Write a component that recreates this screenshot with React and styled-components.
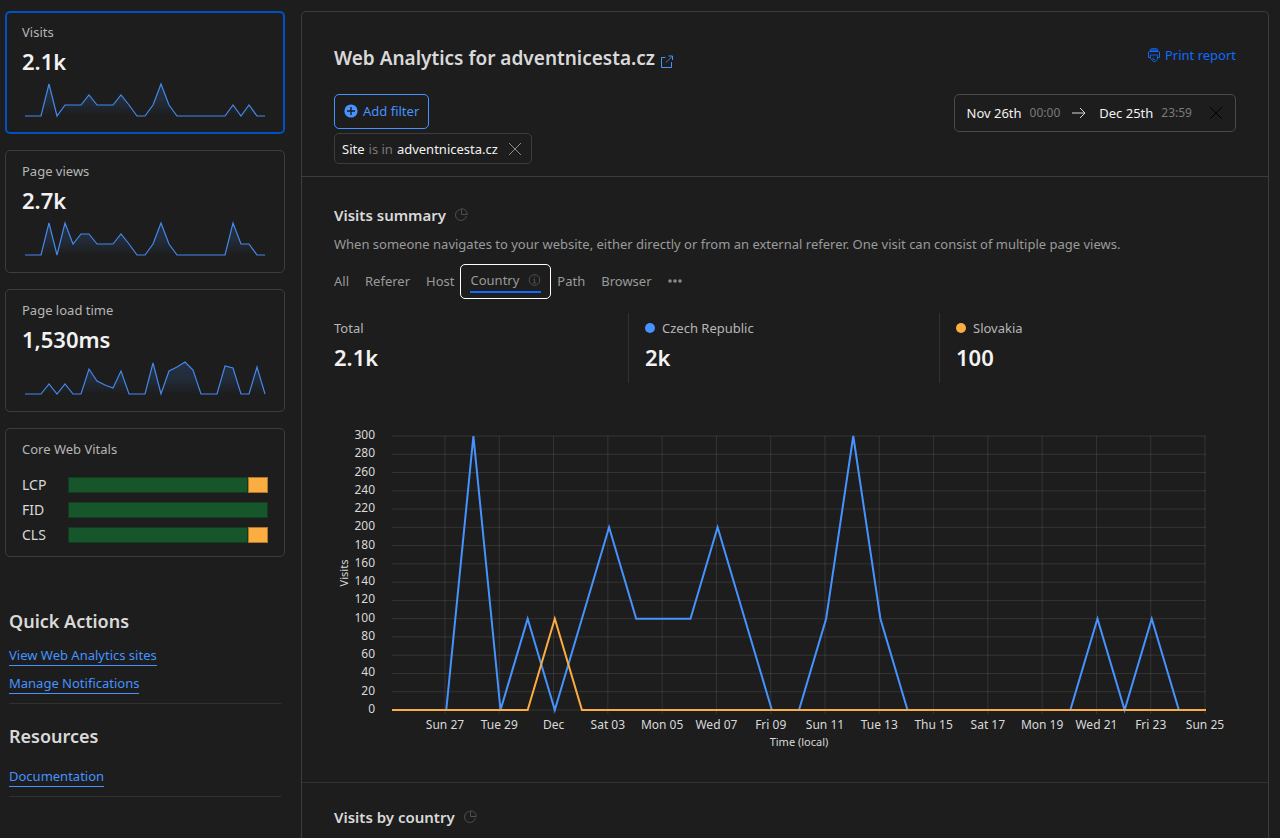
import React from "react";
import styled, { createGlobalStyle } from "styled-components";

const GlobalStyle = createGlobalStyle`
  *, *::before, *::after { box-sizing: border-box; }
  body {
    margin: 0;
    background: #1d1d1d;
    color: #d9d9d9;
    font-family: "Noto Sans", "Open Sans", sans-serif;
    font-size: 13px;
    line-height: 20px;
  }
  button { font: inherit; cursor: pointer; }
  h1, h2, h3, p, ul, dl, dd { margin: 0; padding: 0; }
`;

const Page = styled.div`
  display: grid;
  grid-template-columns: 280px minmax(0, 1fr);
  gap: 16px;
  min-height: 100vh;
  padding: 11px 11px 0 5px;
`;

const Sidebar = styled.aside`
  display: flex;
  flex-direction: column;
  gap: 16px;
`;

const Card = styled.section`
  height: ${(p) => (p.$tall ? 129 : 123)}px;
  padding: ${(p) => (p.$active ? 9 : 10)}px ${(p) => (p.$active ? 15 : 16)}px 0;
  border: ${(p) => (p.$active ? "2px solid #0051c3" : "1px solid #3d3d3d")};
  border-radius: 5px;
`;

const CardTitle = styled.h2`
  font-size: 13px;
  font-weight: 400;
  line-height: 20px;
  color: #b6b6b6;
`;

const CardValue = styled.p`
  font-size: 22px;
  font-weight: 600;
  line-height: 32px;
  padding: 3px 0 5px;
  color: #f2f2f2;
`;

const Spark = styled.svg`
  display: block;
  width: 100%;
  height: 40px;
`;

const Vitals = styled.dl`
  display: grid;
  grid-template-columns: 46px 1fr;
  row-gap: 5px;
  padding-top: 16px;
  align-items: center;
`;

const VitalName = styled.dt`
  font-size: 14px;
  line-height: 20px;
  color: #d9d9d9;
`;

const VitalBar = styled.dd`
  display: flex;
  height: 16px;
`;

const Segment = styled.span`
  flex: 0 0 ${(p) => p.$share}%;
  background: ${(p) => (p.$warn ? "#fbad41" : "#17552b")};
  border: 1px solid ${(p) => (p.$warn ? "#b0762a" : "#0f3d1e")};
`;

const LinkGroup = styled.nav`
  margin: ${(p) => (p.$first ? "32px" : "0")} 4px 0;
  padding-bottom: 9px;
  border-bottom: 1px solid #313131;
`;

const GroupTitle = styled.h2`
  font-size: 18px;
  font-weight: 600;
  line-height: 32px;
  color: #d9d9d9;
  padding-bottom: ${(p) => (p.$roomy ? 15 : 9)}px;
`;

const LinkList = styled.ul`
  display: flex;
  flex-direction: column;
  gap: 8px;
  list-style: none;
`;

const SideLink = styled.a`
  display: block;
  width: fit-content;
  color: #4693ff;
  text-decoration: none;
  line-height: 19px;
  border-bottom: 1px solid #4693ff;
`;

const Panel = styled.main`
  border: 1px solid #3d3d3d;
  border-bottom: 0;
  border-radius: 5px 5px 0 0;
`;

const Header = styled.header`
  display: flex;
  justify-content: space-between;
  padding: 32px 32px 12px;
  border-bottom: 1px solid #3d3d3d;
`;

const HeaderSide = styled.div`
  display: flex;
  flex-direction: column;
  align-items: ${(p) => (p.$end ? "flex-end" : "flex-start")};
`;

const Title = styled.h1`
  display: flex;
  align-items: center;
  gap: 5px;
  font-size: 19px;
  font-weight: 600;
  line-height: 28px;
  margin-bottom: 22px;
  color: #d9d9d9;
`;

const TitleLink = styled.a`
  display: flex;
  padding-top: 6px;
  color: #4693ff;
`;

const AddFilter = styled.button`
  display: flex;
  align-items: center;
  gap: 5px;
  height: 35px;
  margin-bottom: 4px;
  padding: 0 9px 1px;
  color: #4693ff;
  background: none;
  border: 1px solid #4693ff;
  border-radius: 5px;
`;

const FilterChip = styled.div`
  display: flex;
  align-items: center;
  gap: 4px;
  height: 31px;
  padding: 0 9px 0 7px;
  border: 1px solid #3d3d3d;
  border-radius: 5px;
  color: #f2f2f2;
`;

const Faded = styled.span`
  color: #797979;
`;

const IconButton = styled.button`
  display: flex;
  margin-left: ${(p) => p.$space}px;
  padding: 0;
  background: none;
  border: 0;
  color: ${(p) => p.$color};
`;

const PrintButton = styled.button`
  display: flex;
  align-items: center;
  gap: 4px;
  margin-bottom: 28px;
  padding: 1px 0;
  color: #0f6bff;
  background: none;
  border: 0;
`;

const DateRange = styled.div`
  display: flex;
  align-items: center;
  height: 38px;
  padding: 0 12px;
  border: 1px solid #4a4a4a;
  border-radius: 5px;
  color: #f2f2f2;
`;

const Time = styled.span`
  margin-left: 8px;
  font-size: 12px;
  color: #797979;
`;

const Arrow = styled.svg`
  margin: 0 13px 0 12px;
`;

const Section = styled.section`
  padding: ${(p) => (p.$compact ? 22 : 26)}px 32px 0;
`;

const SectionTitle = styled.h2`
  display: flex;
  align-items: center;
  gap: 8px;
  font-size: 15px;
  font-weight: 600;
  line-height: 24px;
  color: #d9d9d9;
`;

const Description = styled.p`
  padding-top: 7px;
  color: #9a9a9a;
`;

const Tabs = styled.div`
  display: flex;
  align-items: center;
  gap: 16px;
  height: 35px;
  margin-top: 10px;
`;

const Tab = styled.button`
  padding: 0 0 2px;
  color: #9a9a9a;
  background: none;
  border: 0;
`;

const ActiveTab = styled(Tab)`
  height: 35px;
  margin: 0 -10px;
  padding: 0 9px 1px;
  border: 1px solid #ffffff;
  border-radius: 5px;
`;

const TabLabel = styled.span`
  display: flex;
  align-items: center;
  gap: 9px;
  height: 24px;
  border-bottom: 2px solid #0f6bff;
`;

const MoreDots = styled.svg`
  display: block;
`;

const Totals = styled.dl`
  display: grid;
  grid-template-columns: 294fr 311fr 297fr;
  padding-top: 14px;
`;

const Total = styled.div`
  height: 70px;
  padding: 5px 0 0 ${(p) => (p.$first ? 0 : 16)}px;
  border-left: ${(p) => (p.$first ? 0 : 1)}px solid #313131;
`;

const TotalName = styled.dt`
  display: flex;
  align-items: center;
  gap: 7px;
  color: #b6b6b6;
`;

const Dot = styled.span`
  width: 10px;
  height: 10px;
  border-radius: 50%;
  background: ${(p) => p.$color};
`;

const TotalValue = styled.dd`
  padding-top: 3px;
  font-size: 22px;
  font-weight: 600;
  line-height: 32px;
  color: #f2f2f2;
`;

const Chart = styled.svg`
  display: block;
  width: 100%;
  height: auto;
  margin-top: 42px;
  font-size: 12px;
  fill: #d9d9d9;
`;

const Divider = styled.hr`
  margin: 17px 0 0;
  border: 0;
  border-top: 1px solid #313131;
`;

const SPARKS = {
  visits: [0, 0, 0, 32, 0, 11, 11, 11, 21, 11, 11, 11, 21, 11, 0, 0, 11, 32, 11, 0, 0, 0, 0, 0, 0, 0, 11, 0, 11, 0, 0],
  views: [0, 0, 0, 32, 0, 32, 11, 21, 21, 11, 11, 11, 21, 11, 0, 0, 11, 32, 11, 0, 0, 0, 0, 0, 0, 0, 32, 11, 11, 0, 0],
  load: [0, 0, 0, 10, 0, 10, 0, 0, 25, 13, 9, 6, 23, 0, 0, 0, 31, 0, 23, 27, 32, 24, 0, 0, 0, 28, 26, 0, 0, 27, 0],
};

const CZECH = [0, 0, 0, 300, 0, 100, 0, 100, 200, 100, 100, 100, 200, 100, 0, 0, 100, 300, 100, 0, 0, 0, 0, 0, 0, 0, 100, 0, 100, 0, 0];
const SLOVAKIA = CZECH.map((_, i) => (i === 6 ? 100 : 0));
const DAYS = ["Sun 27", "Tue 29", "Dec", "Sat 03", "Mon 05", "Wed 07", "Fri 09", "Sun 11", "Tue 13", "Thu 15", "Sat 17", "Mon 19", "Wed 21", "Fri 23", "Sun 25"];

function Sparkline({ id, data }) {
  const points = data.map((v, i) => `${3 + i * 8},${34 - v}`).join(" ");
  return (
    <Spark viewBox="0 0 246 40" aria-hidden="true">
      <defs>
        <linearGradient id={id} x1="0" y1="0" x2="0" y2="1">
          <stop offset="0" stopColor="#4693ff" stopOpacity="0.17" />
          <stop offset="0.5" stopColor="#4693ff" stopOpacity="0.13" />
          <stop offset="1" stopColor="#4693ff" stopOpacity="0" />
        </linearGradient>
      </defs>
      <polygon points={`3,34 ${points} 243,34`} fill={`url(#${id})`} />
      <polyline points={points} fill="none" stroke="#4488ec" strokeWidth="1.2" />
    </Spark>
  );
}

function MetricCard({ id, title, value, active }) {
  return (
    <Card $active={active}>
      <CardTitle>{title}</CardTitle>
      <CardValue>{value}</CardValue>
      <Sparkline id={id} data={SPARKS[id]} />
    </Card>
  );
}

function Vital({ name, warn }) {
  return (
    <>
      <VitalName>{name}</VitalName>
      <VitalBar>
        <Segment $share={warn ? 90 : 100} />
        {warn && <Segment $share={10} $warn />}
      </VitalBar>
    </>
  );
}

function VisitsChart() {
  const x = (i) => 58 + (i * 814) / 30;
  const y = (v) => 285 - (v * 274) / 300;
  const line = (data) => data.map((v, i) => `${x(i)},${y(v)}`).join(" ");
  const ticks = Array.from({ length: 16 }, (_, i) => i * 20);
  return (
    <Chart viewBox="0 0 902 340" role="img" aria-label="Visits over time by country">
      {ticks.map((v) => (
        <g key={v}>
          <line x1="58" x2="872" y1={y(v)} y2={y(v)} stroke="#fff" strokeOpacity="0.1" />
          <text x="41" y={y(v) + 3} textAnchor="end">{v}</text>
        </g>
      ))}
      {DAYS.map((day, i) => {
        const dx = 111 + (i * 760) / 14;
        return (
          <g key={day}>
            <line x1={dx} x2={dx} y1="11" y2="289" stroke="#fff" strokeOpacity="0.1" />
            <text x={dx} y="304" textAnchor="middle">{day}</text>
          </g>
        );
      })}
      <polyline points={line(CZECH)} fill="none" stroke="#4693ff" strokeWidth="2" />
      <polyline points={line(SLOVAKIA)} fill="none" stroke="#fbad41" strokeWidth="2" />
      <text transform="translate(14 148) rotate(-90)" textAnchor="middle" fontSize="11">Visits</text>
      <text x="465" y="321" textAnchor="middle" fontSize="11">Time (local)</text>
    </Chart>
  );
}

const PieIcon = () => (
  <svg width="14" height="14" viewBox="0 0 14 14" fill="none" stroke="#4f4f4f" aria-hidden="true">
    <path d="M6.5 1.5A5.5 5.5 0 1 0 12.4 8" />
    <path d="M7.5 0.7V6.5H13.3A5.8 5.8 0 0 0 7.5 0.7Z" />
  </svg>
);

const CloseIcon = () => (
  <svg width="14" height="14" viewBox="0 0 14 14" fill="none" stroke="currentColor" aria-hidden="true">
    <path d="M1 1L13 13M13 1L1 13" />
  </svg>
);

export default function App() {
  return (
    <>
      <GlobalStyle />
      <Page>
        <Sidebar>
          <MetricCard id="visits" title="Visits" value="2.1k" active />
          <MetricCard id="views" title="Page views" value="2.7k" />
          <MetricCard id="load" title="Page load time" value="1,530ms" />
          <Card $tall>
            <CardTitle>Core Web Vitals</CardTitle>
            <Vitals>
              <Vital name="LCP" warn />
              <Vital name="FID" />
              <Vital name="CLS" warn />
            </Vitals>
          </Card>
          <LinkGroup $first>
            <GroupTitle>Quick Actions</GroupTitle>
            <LinkList>
              <li><SideLink href="#sites">View Web Analytics sites</SideLink></li>
              <li><SideLink href="#notifications">Manage Notifications</SideLink></li>
            </LinkList>
          </LinkGroup>
          <LinkGroup>
            <GroupTitle $roomy>Resources</GroupTitle>
            <SideLink href="#docs">Documentation</SideLink>
          </LinkGroup>
        </Sidebar>

        <Panel>
          <Header>
            <HeaderSide>
              <Title>
                Web Analytics for adventnicesta.cz
                <TitleLink href="#site" aria-label="Open site">
                  <svg width="13" height="13" viewBox="0 0 13 13" fill="none" stroke="currentColor">
                    <path d="M5.5 2.5H1.5V12.5H11.5V7" />
                    <path d="M6 7.5L12 1.5" strokeOpacity="0.8" />
                    <path d="M8.5 1H12.5V5" />
                  </svg>
                </TitleLink>
              </Title>
              <AddFilter>
                <svg width="14" height="14" viewBox="0 0 14 14" aria-hidden="true">
                  <circle cx="7" cy="7" r="6.6" fill="#4693ff" />
                  <path d="M7 3V11M3 7H11" stroke="#1d1d1d" strokeWidth="1.4" />
                </svg>
                Add filter
              </AddFilter>
              <FilterChip>
                <span>Site</span>
                <Faded>is in</Faded>
                <span>adventnicesta.cz</span>
                <IconButton $space={6} $color="#8a8a8a" aria-label="Remove filter"><CloseIcon /></IconButton>
              </FilterChip>
            </HeaderSide>
            <HeaderSide $end>
              <PrintButton>
                <svg width="14" height="16" viewBox="0 0 14 16" fill="none" stroke="currentColor" aria-hidden="true">
                  <path d="M3 4V2.5L4.5 1.5H9.5L11 2.5V4Z" fill="#0f6bff" fillOpacity="0.5" strokeOpacity="0.6" />
                  <path d="M3.5 10.5H1.5V5L2.5 4.5H11.5L12.5 5V10.5H10.5" />
                  <path d="M3.5 8H10.5V12L8.5 14.5H6.5L3.5 11.5Z" strokeOpacity="0.8" />
                  <path d="M6 10.5V12.5H8" strokeOpacity="0.8" />
                </svg>
                Print report
              </PrintButton>
              <DateRange>
                <span>Nov 26th</span>
                <Time>00:00</Time>
                <Arrow width="14" height="12" viewBox="0 0 14 12" fill="none" stroke="#d9d9d9" aria-hidden="true">
                  <path d="M0 6H13M8 1L13 6L8 11" />
                </Arrow>
                <span>Dec 25th</span>
                <Time>23:59</Time>
                <IconButton $space={17} $color="#000000" aria-label="Clear dates"><CloseIcon /></IconButton>
              </DateRange>
            </HeaderSide>
          </Header>

          <Section>
            <SectionTitle>Visits summary <PieIcon /></SectionTitle>
            <Description>
              When someone navigates to your website, either directly or from an external referer. One visit can consist of multiple page views.
            </Description>
            <Tabs>
              <Tab>All</Tab>
              <Tab>Referer</Tab>
              <Tab>Host</Tab>
              <ActiveTab>
                <TabLabel>
                  Country
                  <svg width="13" height="12" viewBox="0 0 13 12" fill="none" stroke="#4f4f4f" aria-hidden="true">
                    <circle cx="6.5" cy="6" r="5.3" />
                    <path d="M6.5 5V9M5 9H8M5.3 5H6.5M6 3H7" />
                  </svg>
                </TabLabel>
              </ActiveTab>
              <Tab>Path</Tab>
              <Tab>Browser</Tab>
              <Tab aria-label="More">
                <MoreDots width="14" height="4" viewBox="0 0 14 4" fill="#8a8a8a">
                  <circle cx="2" cy="2" r="1.8" />
                  <circle cx="7" cy="2" r="1.8" />
                  <circle cx="12" cy="2" r="1.8" />
                </MoreDots>
              </Tab>
            </Tabs>
            <Totals>
              <Total $first>
                <TotalName>Total</TotalName>
                <TotalValue>2.1k</TotalValue>
              </Total>
              <Total>
                <TotalName><Dot $color="#4693ff" />Czech Republic</TotalName>
                <TotalValue>2k</TotalValue>
              </Total>
              <Total>
                <TotalName><Dot $color="#fbad41" />Slovakia</TotalName>
                <TotalValue>100</TotalValue>
              </Total>
            </Totals>
            <VisitsChart />
          </Section>
          <Divider />
          <Section $compact>
            <SectionTitle>Visits by country <PieIcon /></SectionTitle>
          </Section>
        </Panel>
      </Page>
    </>
  );
}
